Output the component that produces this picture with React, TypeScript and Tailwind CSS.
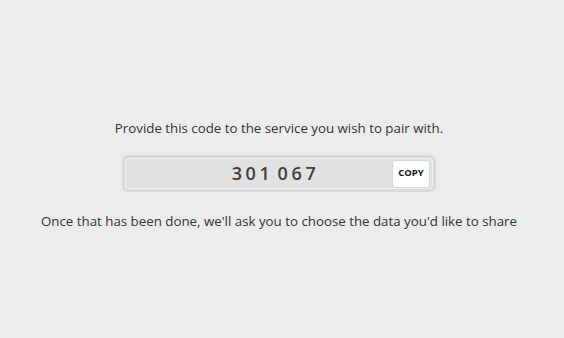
import React from 'react';

const code = '301 067';

export default function App() {
  return (
    <div
      className="flex h-[338px] w-[564px] flex-col items-center bg-[#ececec] pr-[6px] pt-[119px] text-[#333]"
      style={{ fontFamily: '"Open Sans", "Noto Sans", sans-serif' }}
    >
      <p className="text-[13.3px] leading-[18px]">Provide this code to the service you wish to pair with.</p>

      {/* Code box */}
      <div className="mt-[18px] flex h-[37px] w-[314px] items-center rounded-[6px] border-[3px] border-[#dadada] bg-[#e2e2e2] pr-[3px] shadow-[inset_0_0_0_1px_#f2f2f2]">
        <span className="flex-1 pl-[34px] text-center text-[18px] font-semibold tracking-[3.6px] text-[#3d3d3d] [word-spacing:-4px]">
          {code}
        </span>
        <button className="flex h-[28px] w-[38px] items-center justify-center rounded-[3px] border border-[#d6d6d6] bg-white text-[9.5px] font-bold text-[#111]">
          COPY
        </button>
      </div>

      <p className="mt-[20px] text-[13.3px] leading-[18px]">
        Once that has been done, we'll ask you to choose the data you'd like to share
      </p>
    </div>
  );
}
